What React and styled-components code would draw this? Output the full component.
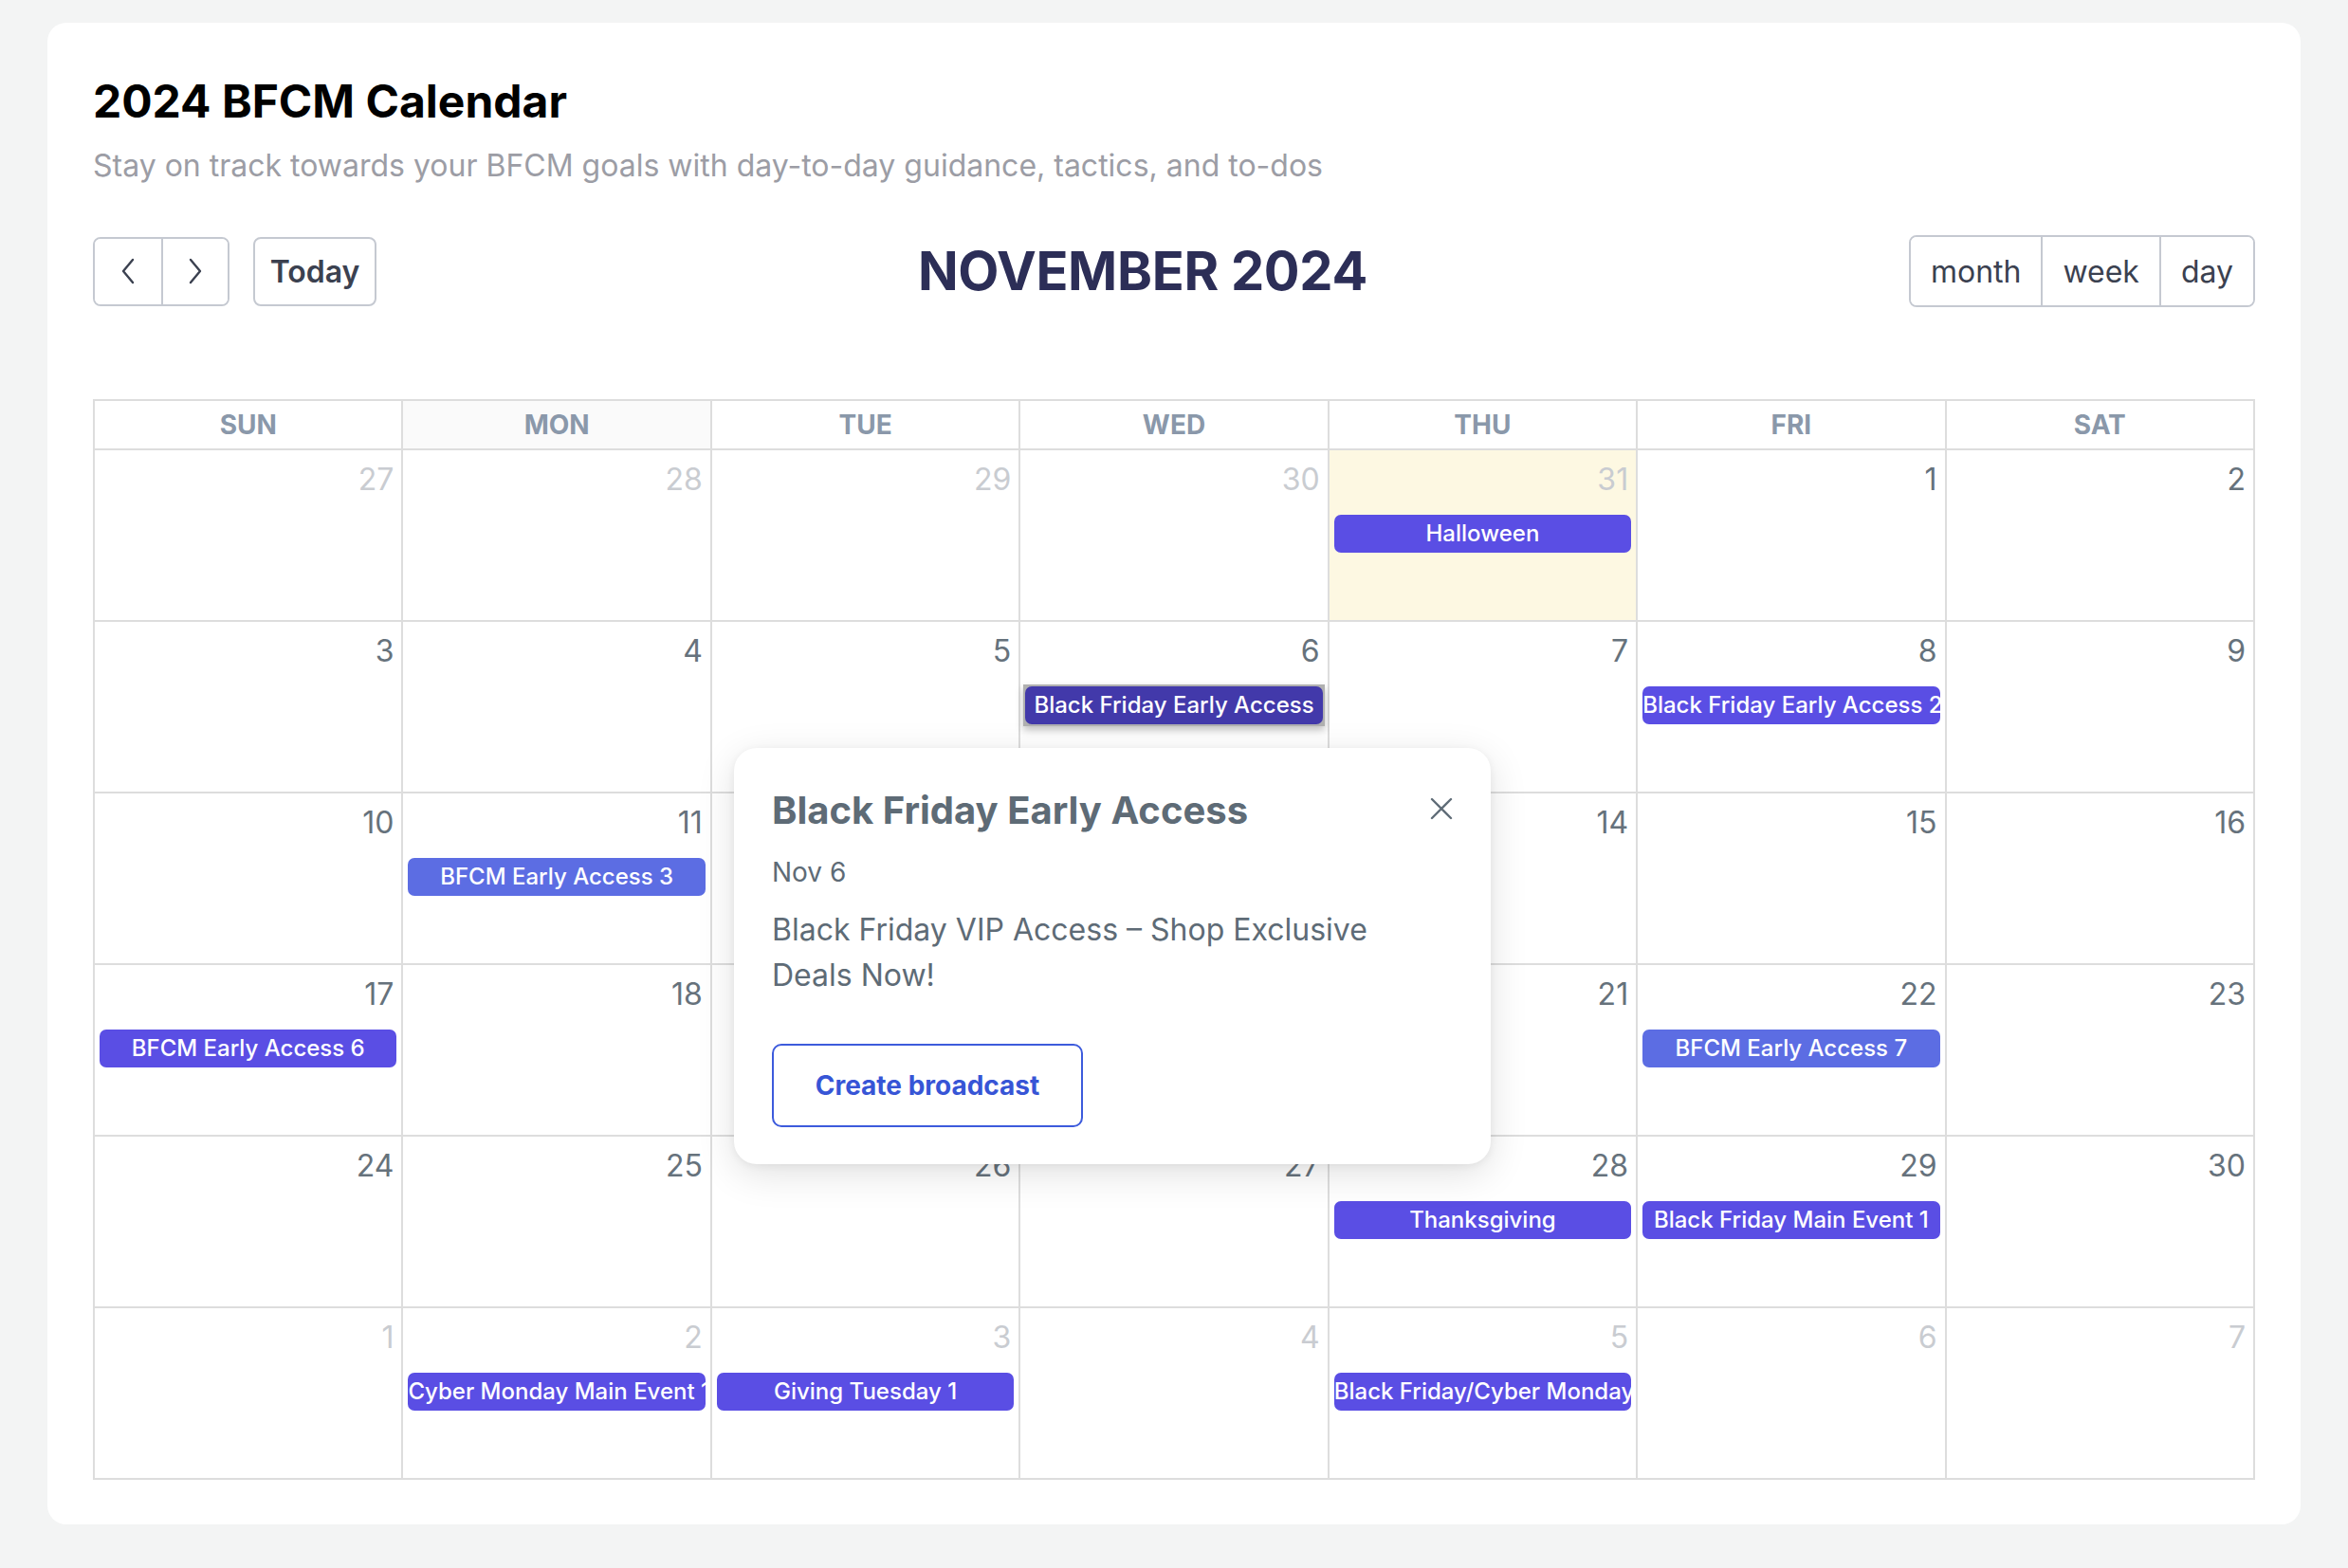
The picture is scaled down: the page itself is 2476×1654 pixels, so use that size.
import React from 'react'
import styled, { createGlobalStyle } from 'styled-components'

const GlobalStyle = createGlobalStyle`
  * { box-sizing: border-box; }
  body {
    margin: 0;
    background: #f3f4f4;
    font-family: Inter, "Noto Sans", sans-serif;
  }
`

const weeks = [
  [
    { d: 27, other: true }, { d: 28, other: true }, { d: 29, other: true }, { d: 30, other: true },
    { d: 31, other: true, today: true, events: [{ title: 'Halloween' }] },
    { d: 1 }, { d: 2 },
  ],
  [
    { d: 3 }, { d: 4 }, { d: 5 },
    { d: 6, events: [{ title: 'Black Friday Early Access', selected: true }] },
    { d: 7 },
    { d: 8, events: [{ title: 'Black Friday Early Access 2' }] },
    { d: 9 },
  ],
  [
    { d: 10 },
    { d: 11, events: [{ title: 'BFCM Early Access 3', light: true }] },
    { d: 12 }, { d: 13 }, { d: 14 }, { d: 15 }, { d: 16 },
  ],
  [
    { d: 17, events: [{ title: 'BFCM Early Access 6' }] },
    { d: 18 }, { d: 19 }, { d: 20 }, { d: 21 },
    { d: 22, events: [{ title: 'BFCM Early Access 7', light: true }] },
    { d: 23 },
  ],
  [
    { d: 24 }, { d: 25 }, { d: 26 }, { d: 27 },
    { d: 28, events: [{ title: 'Thanksgiving' }] },
    { d: 29, events: [{ title: 'Black Friday Main Event 1' }] },
    { d: 30 },
  ],
  [
    { d: 1, other: true },
    { d: 2, other: true, events: [{ title: 'Cyber Monday Main Event 1' }] },
    { d: 3, other: true, events: [{ title: 'Giving Tuesday 1' }] },
    { d: 4, other: true },
    { d: 5, other: true, events: [{ title: 'Black Friday/Cyber Monday' }] },
    { d: 6, other: true }, { d: 7, other: true },
  ],
]

const dayNames = ['SUN', 'MON', 'TUE', 'WED', 'THU', 'FRI', 'SAT']

function Chevron({ dir }) {
  const pts = dir === 'left' ? '13,2 3,14 13,26' : '3,2 13,14 3,26'
  return (
    <svg width="16" height="28" viewBox="0 0 16 28" fill="none">
      <polyline points={pts} stroke="#3b4150" strokeWidth="2.4" strokeLinecap="round" strokeLinejoin="round" />
    </svg>
  )
}

function EventChip({ ev }) {
  if (ev.selected) {
    return (
      <SelectedFrame>
        <Event $selected>{ev.title}</Event>
      </SelectedFrame>
    )
  }
  return <Event $light={ev.light}>{ev.title}</Event>
}

export default function App() {
  return (
    <Page>
      <GlobalStyle />
      <Card>
        <Title>2024 BFCM Calendar</Title>
        <Subtitle>Stay on track towards your BFCM goals with day-to-day guidance, tactics, and to-dos</Subtitle>

        <Toolbar>
          <ToolChunk>
            <ButtonGroup>
              <NavButton aria-label="prev"><Chevron dir="left" /></NavButton>
              <NavButton aria-label="next"><Chevron dir="right" /></NavButton>
            </ButtonGroup>
            <TodayButton>Today</TodayButton>
          </ToolChunk>
          <MonthTitle>NOVEMBER 2024</MonthTitle>
          <ButtonGroup $tall>
            <ViewButton>month</ViewButton>
            <ViewButton>week</ViewButton>
            <ViewButton>day</ViewButton>
          </ButtonGroup>
        </Toolbar>

        <CalendarWrap>
          <Grid>
            {dayNames.map((n) => (
              <HeadCell key={n} $active={n === 'MON'}>{n}</HeadCell>
            ))}
            {weeks.flat().map((day, i) => (
              <DayCell key={i} $today={day.today}>
                <DayNumber $other={day.other}>{day.d}</DayNumber>
                {day.events && (
                  <Events>
                    {day.events.map((ev) => <EventChip key={ev.title} ev={ev} />)}
                  </Events>
                )}
              </DayCell>
            ))}
          </Grid>

          <Popover>
            <PopHead>
              <PopTitle>Black Friday Early Access</PopTitle>
              <CloseButton aria-label="close">
                <svg width="24" height="24" viewBox="0 0 24 24" fill="none">
                  <path d="M2 2L22 22M22 2L2 22" stroke="#5f6c77" strokeWidth="2.4" strokeLinecap="round" />
                </svg>
              </CloseButton>
            </PopHead>
            <PopDate>Nov 6</PopDate>
            <PopText>Black Friday VIP Access – Shop Exclusive Deals Now!</PopText>
            <CreateButton>Create broadcast</CreateButton>
          </Popover>
        </CalendarWrap>
      </Card>
    </Page>
  )
}

const Page = styled.div`
  padding: 24px 50px 45px 50px;
`

const Card = styled.div`
  background: #fff;
  border-radius: 20px;
  padding: 54px 48px 47px;
`

const Title = styled.h1`
  margin: 0;
  font-size: 48px;
  line-height: 58px;
  font-weight: 700;
  color: #000;
`

const Subtitle = styled.p`
  margin: 15px 0 0;
  font-size: 32px;
  line-height: 48px;
  color: #9c9da5;
`

const Toolbar = styled.div`
  margin-top: 49px;
  height: 76px;
  display: flex;
  justify-content: space-between;
  align-items: center;
`

const ToolChunk = styled.div`
  display: flex;
  align-items: center;
  gap: 25px;
`

const ButtonGroup = styled.div`
  display: flex;
  height: ${(p) => (p.$tall ? '76px' : '73px')};
  border: 2px solid #c5c9d1;
  border-radius: 8px;
  overflow: hidden;
  background: #fff;

  & > button + button {
    border-left: 2px solid #c5c9d1;
  }
`

const NavButton = styled.button`
  width: 70px;
  height: 100%;
  display: flex;
  align-items: center;
  justify-content: center;
  background: #fff;
  border: none;
  padding: 0;
`

const TodayButton = styled.button`
  width: 130px;
  height: 73px;
  border: 2px solid #c5c9d1;
  border-radius: 8px;
  background: #fff;
  font-family: Inter, sans-serif;
  font-size: 32px;
  font-weight: 600;
  color: #3b4150;
`

const ViewButton = styled.button`
  height: 100%;
  padding: 0 21px;
  background: #fff;
  border: none;
  font-family: Inter, sans-serif;
  font-size: 32px;
  font-weight: 400;
  color: #3b4150;
`

const MonthTitle = styled.h2`
  margin: 0;
  font-size: 56px;
  font-weight: 700;
  color: #2c2e57;
  letter-spacing: -0.3px;
`

const CalendarWrap = styled.div`
  position: relative;
  margin-top: 97px;
`

const Grid = styled.div`
  display: grid;
  grid-template-columns: repeat(7, 1fr);
  border-top: 2px solid #dddddd;
  border-left: 2px solid #dddddd;
`

const HeadCell = styled.div`
  height: 52px;
  display: flex;
  align-items: center;
  justify-content: center;
  border-right: 2px solid #dddddd;
  border-bottom: 2px solid #dddddd;
  background: ${(p) => (p.$active ? '#fafafa' : '#fff')};
  font-size: 28px;
  font-weight: 700;
  color: #8a98aa;
`

const DayCell = styled.div`
  height: 181px;
  display: flex;
  flex-direction: column;
  border-right: 2px solid #dddddd;
  border-bottom: 2px solid #dddddd;
  background: ${(p) => (p.$today ? '#fdf8e2' : '#fff')};
  min-width: 0;
`

const DayNumber = styled.div`
  align-self: flex-end;
  padding: 11px 8px 0;
  font-size: 32px;
  line-height: 39px;
  color: ${(p) => (p.$other ? '#c9ccd1' : '#66727c')};
`

const Events = styled.div`
  margin-top: 18px;
  display: flex;
  flex-direction: column;
  gap: 4px;
`

const SelectedFrame = styled.div`
  margin: -2px 3px 0;
  padding: 2px;
  background: #b0b0b0;
  box-shadow: 0 4px 8px rgba(0, 0, 0, 0.25);
`

const Event = styled.div`
  margin: ${(p) => (p.$selected ? '0' : '0 5px')};
  height: 40px;
  border-radius: 7px;
  background: ${(p) => (p.$selected ? '#4239aa' : p.$light ? '#5c6de3' : '#5a4ee4')};
  color: #fff;
  font-size: 24px;
  font-weight: 500;
  line-height: 40px;
  text-align: center;
  white-space: nowrap;
  overflow: hidden;
`

const Popover = styled.div`
  position: absolute;
  left: 676px;
  top: 368px;
  width: 798px;
  z-index: 5;
  background: #fff;
  border-radius: 24px;
  padding: 42px 40px 39px;
  box-shadow: 0 10px 40px rgba(0, 0, 0, 0.12), 0 2px 8px rgba(0, 0, 0, 0.06);
`

const PopHead = styled.div`
  display: flex;
  justify-content: space-between;
  align-items: flex-start;
`

const PopTitle = styled.h3`
  margin: 0;
  font-size: 40px;
  line-height: 48px;
  font-weight: 700;
  color: #5e6b76;
`

const CloseButton = styled.button`
  margin-top: 10px;
  padding: 0;
  border: none;
  background: none;
  display: flex;
`

const PopDate = styled.div`
  margin-top: 24px;
  font-size: 28px;
  line-height: 34px;
  color: #5e6b76;
`

const PopText = styled.p`
  margin: 20px 0 0;
  max-width: 680px;
  font-size: 32px;
  line-height: 48px;
  color: #5e6b76;
`

const CreateButton = styled.button`
  margin-top: 48px;
  width: 328px;
  height: 88px;
  border: 2px solid #3d5bdc;
  border-radius: 10px;
  background: #fff;
  font-family: Inter, sans-serif;
  font-size: 28px;
  font-weight: 700;
  color: #3755d6;
`
